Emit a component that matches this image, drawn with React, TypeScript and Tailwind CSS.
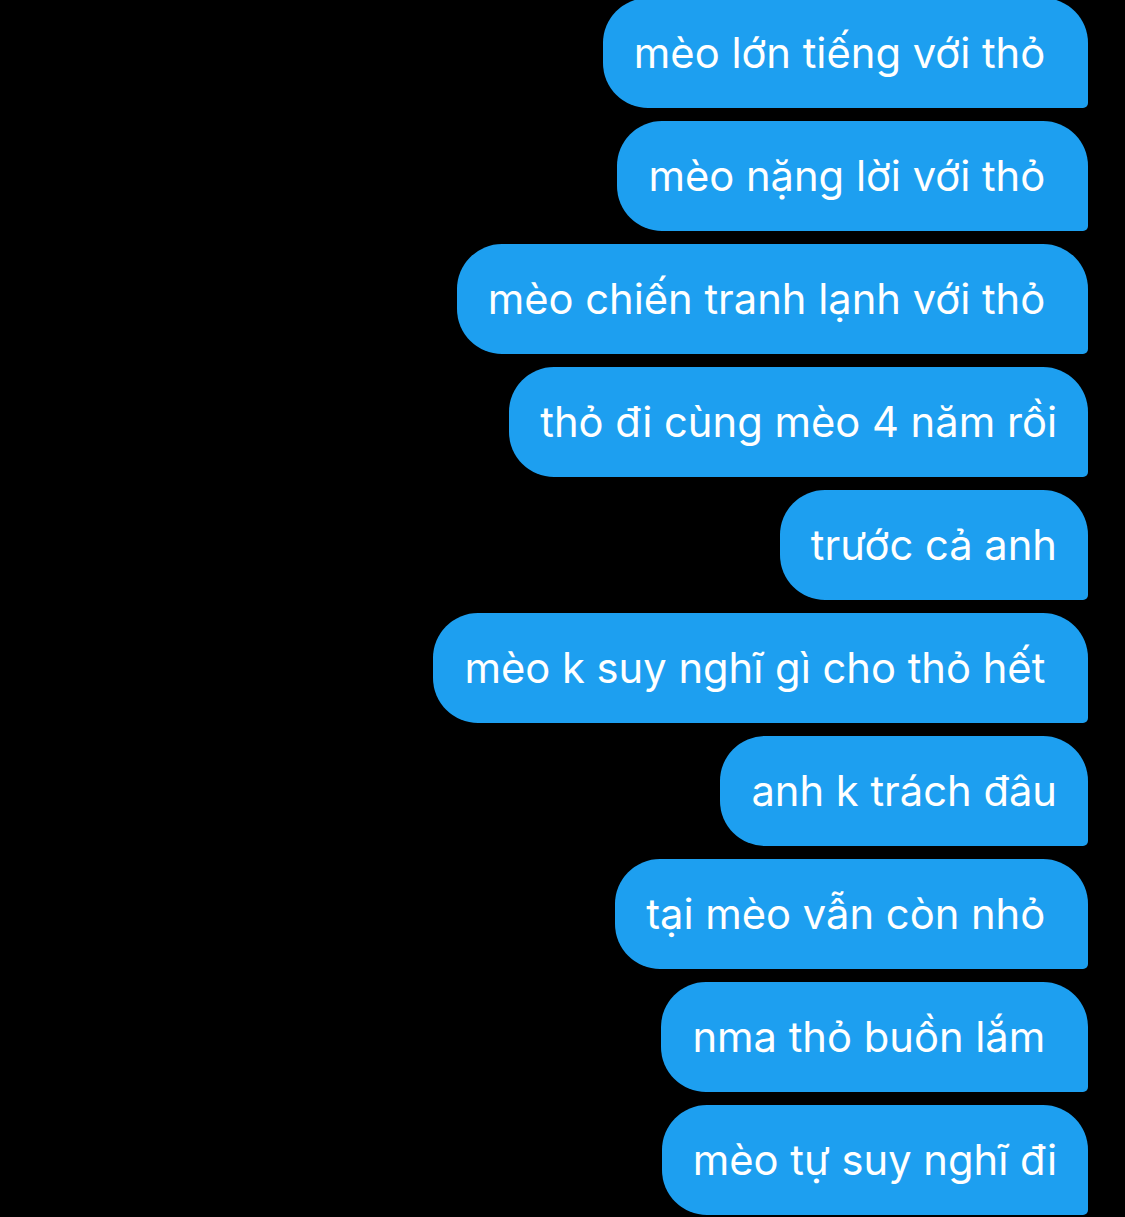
import React from "react";

const messages = [
  "mèo lớn tiếng với thỏ\u00a0",
  "mèo nặng lời với thỏ\u00a0",
  "mèo chiến tranh lạnh với thỏ\u00a0",
  "thỏ đi cùng mèo 4 năm rồi",
  "trước cả anh",
  "mèo k suy nghĩ gì cho thỏ hết\u00a0",
  "anh k trách đâu",
  "tại mèo vẫn còn nhỏ\u00a0",
  "nma thỏ buồn lắm\u00a0",
  "mèo tự suy nghĩ đi",
];

export default function App() {
  return (
    <div
      className="w-[1125px] h-[1217px] bg-black overflow-hidden"
      style={{ fontFamily: "Inter, 'Noto Sans', sans-serif" }}
    >
      <div className="flex flex-col items-end gap-[13px] pr-[37px] mt-[-2px]">
        {messages.map((m, i) => (
          <div
            key={i}
            className="h-[110px] flex items-center px-[31px] pt-[1px] bg-[#1d9ff0] text-white text-[41.7px] leading-none whitespace-pre rounded-tl-[45px] rounded-bl-[45px] rounded-tr-[45px] rounded-br-[5px]"
          >
            {m}
          </div>
        ))}
      </div>
    </div>
  );
}
